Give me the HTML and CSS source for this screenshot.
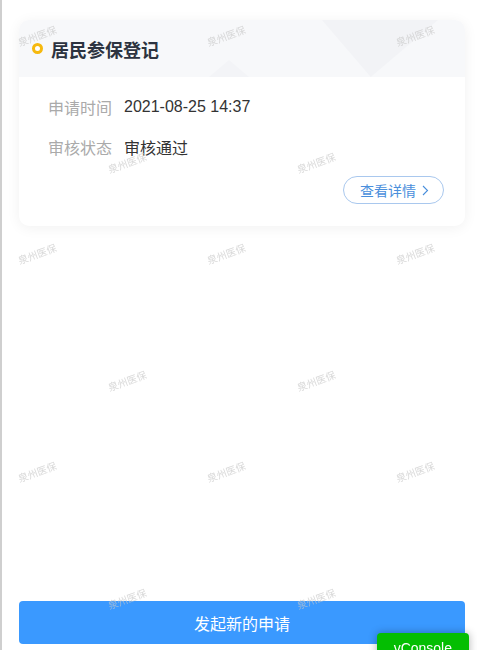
FILE: index.html
```html
<!DOCTYPE html>
<html lang="zh-CN">
<head>
    <meta charset="UTF-8">
    <meta name="viewport" content="width=device-width, initial-scale=1.0">
    <title>居民参保登记</title>
    <link rel="stylesheet" href="styles.css">
</head>
<body>
    <div class="page">
        <div class="record-card">
            <div class="card-head">
                <span class="head-shape shape-down"></span>
                <span class="head-shape shape-up"></span>
                <span class="title-dot"></span>
                <p class="card-title">居民参保登记</p>
            </div>
            <div class="card-body">
                <div class="info-row">
                    <span class="info-label">申请时间</span>
                    <span class="info-value">2021-08-25 14:37</span>
                </div>
                <div class="info-row">
                    <span class="info-label">审核状态</span>
                    <span class="info-value">审核通过</span>
                </div>
                <div class="card-actions">
                    <button class="detail-btn">
                        查看详情
                        <svg class="chevron" width="7" height="11" viewBox="0 0 7 11">
                            <polyline points="1,1 5.5,5.5 1,10" fill="none" stroke="#4a8fdc" stroke-width="1.1"/>
                        </svg>
                    </button>
                </div>
            </div>
        </div>

        <button class="apply-btn">发起新的申请</button>
    </div>

    <div class="watermark">
        <div class="wm-row wm-a"><span>泉州医保</span><span>泉州医保</span><span>泉州医保</span></div>
        <div class="wm-row wm-b"><span>泉州医保</span><span>泉州医保</span></div>
        <div class="wm-row wm-a"><span>泉州医保</span><span>泉州医保</span><span>泉州医保</span></div>
        <div class="wm-row wm-b"><span>泉州医保</span><span>泉州医保</span></div>
        <div class="wm-row wm-a"><span>泉州医保</span><span>泉州医保</span><span>泉州医保</span></div>
        <div class="wm-row wm-b"><span>泉州医保</span><span>泉州医保</span></div>
    </div>

    <div class="vconsole-switch">vConsole</div>
</body>
</html>
```

FILE: styles.css
```css
html, body {
    margin: 0;
    height: 100%;
}
body {
    background-color: #fff;
    border-left: 2px solid #cfcfcf;
    font-family: "Liberation Sans", "Noto Sans CJK SC", sans-serif;
    color: #333;
    overflow: hidden;
}
.page {
    display: flex;
    flex-direction: column;
    height: 100vh;
    box-sizing: border-box;
    padding: 20px 12px 6px 17px;
}
.record-card {
    background-color: #fff;
    border-radius: 10px;
    box-shadow: 0 2px 14px rgba(0, 0, 0, 0.06);
    overflow: hidden;
}
.card-head {
    position: relative;
    display: flex;
    align-items: center;
    gap: 8px;
    height: 57px;
    padding-left: 13px;
    background-color: #f7f8fa;
    overflow: hidden;
}
.head-shape {
    position: absolute;
    top: 0;
    height: 57px;
}
.shape-down {
    left: 303px;
    width: 116px;
    background-color: #f2f3f6;
    clip-path: polygon(0 0, 100% 0, 42% 100%);
}
.shape-up {
    left: 190px;
    width: 40px;
    top: 40px;
    height: 17px;
    background-color: #f3f4f7;
    clip-path: polygon(50% 0, 100% 100%, 0 100%);
}
.title-dot {
    position: relative;
    width: 5px;
    height: 5px;
    border: 3px solid #f6b90e;
    border-radius: 50%;
    background-color: #fff;
}
.card-title {
    position: relative;
    margin: 0;
    font-family: "Noto Sans CJK SC", sans-serif;
    font-size: 18px;
    font-weight: bold;
    color: #2c3340;
}
.card-body {
    padding: 19px 21px 22px 29px;
}
.info-row {
    display: flex;
    align-items: center;
    gap: 12px;
    height: 22px;
    margin-bottom: 18px;
    font-size: 16px;
}
.info-label {
    color: #aaa;
    font-family: "Noto Sans CJK SC", sans-serif;
}
.info-value {
    color: #333;
}
.card-actions {
    display: flex;
    justify-content: flex-end;
}
.detail-btn {
    display: flex;
    align-items: center;
    gap: 6px;
    height: 28px;
    padding: 0 14px 0 16px;
    background-color: #fff;
    border: 1px solid #a9c8ee;
    border-radius: 14px;
    color: #4a8fdc;
    font-family: "Noto Sans CJK SC", sans-serif;
    font-size: 14px;
    cursor: pointer;
}
.apply-btn {
    margin-top: auto;
    height: 43px;
    background-color: #3a99ff;
    border: none;
    border-radius: 4px;
    color: #fff;
    font-family: "Noto Sans CJK SC", sans-serif;
    font-size: 16px;
    cursor: pointer;
}
.watermark {
    position: fixed;
    inset: 0;
    padding-top: 25px;
    pointer-events: none;
}
.wm-row {
    display: flex;
    gap: 149px;
    height: 20px;
    align-items: center;
}
.wm-row span {
    width: 40px;
    text-align: center;
    font-family: "Noto Sans CJK SC", sans-serif;
    font-size: 10px;
    color: rgba(200, 200, 200, 0.7);
    transform: rotate(-20deg);
    white-space: nowrap;
}
.wm-a {
    padding-left: 17px;
    margin-top: 71px;
}
.wm-a:first-child {
    margin-top: 0;
}
.wm-b {
    padding-left: 107px;
    margin-top: 107px;
}
.vconsole-switch {
    position: fixed;
    right: 8px;
    bottom: -14px;
    padding: 7px 17px;
    background-color: #04be02;
    border-radius: 4px;
    box-shadow: 0 0 8px rgba(0, 0, 0, 0.3);
    color: #fff;
    font-family: "Liberation Sans", sans-serif;
    font-size: 14px;
    line-height: 17px;
}
```
